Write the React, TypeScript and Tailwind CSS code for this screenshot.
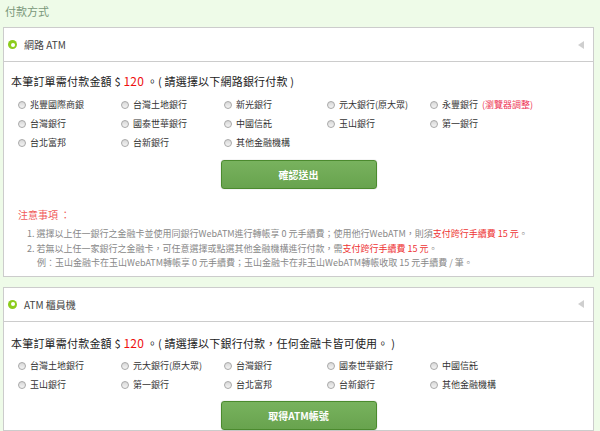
import React from "react";

const font = { fontFamily: '"Noto Sans CJK TC", "Noto Sans", sans-serif' };

function Radio() {
  return (
    <span className="inline-block w-[8px] h-[8px] rounded-full border border-[#a8a8a8] bg-gradient-to-b from-[#d8d8d8] to-[#f4f4f4] shrink-0" />
  );
}

function Option({ label, extra }: { label: string; extra?: string }) {
  return (
    <div className="flex items-center gap-[4px] h-[19px] text-[9px] text-[#333] whitespace-nowrap">
      <Radio />
      <span>{label}</span>
      {extra && <span className="text-[#ee3355]">{extra}</span>}
    </div>
  );
}

function Header({ title }: { title: string }) {
  return (
    <div className="h-[34px] border-b border-[#cccccc] flex items-center pl-[4px] pr-[9px]">
      <span className="w-[9px] h-[9px] rounded-full bg-[#8ccc1c] flex items-center justify-center">
        <span className="w-[4px] h-[4px] rounded-full bg-white" />
      </span>
      <span className="ml-[7px] text-[10px] text-[#444]">{title}</span>
      <span className="ml-auto w-0 h-0 border-y-[4px] border-y-transparent border-r-[6px] border-r-[#cfcfcf]" />
    </div>
  );
}

function Amount({ tail }: { tail: string }) {
  return (
    <div className="text-[11px] leading-[16px] tracking-[0.2px] text-[#222] whitespace-nowrap">
      本筆訂單需付款金額 $ <span className="text-[#ee1111] text-[12px]">120</span> 。( {tail} )
    </div>
  );
}

function GreenButton({ label }: { label: string }) {
  return (
    <div className="w-[156px] h-[29px] rounded-[3px] border border-[#4b8a2e] bg-gradient-to-b from-[#78b25e] to-[#68a34e] flex items-center justify-center text-white text-[10px] font-bold shadow-[0_0_1px_#999]">
      {label}
    </div>
  );
}

export default function App() {
  const web1 = [
    ["兆豐國際商銀"], ["台灣土地銀行"], ["新光銀行"], ["元大銀行(原大眾)"], ["永豐銀行", "(瀏覽器調整)"],
    ["台灣銀行"], ["國泰世華銀行"], ["中國信託"], ["玉山銀行"], ["第一銀行"],
    ["台北富邦"], ["台新銀行"], ["其他金融機構"],
  ];
  const atm = [
    "台灣土地銀行", "元大銀行(原大眾)", "台灣銀行", "國泰世華銀行", "中國信託",
    "玉山銀行", "第一銀行", "台北富邦", "台新銀行", "其他金融機構",
  ];
  return (
    <div className="w-[600px] h-[431px] overflow-hidden bg-[#eefbe8]" style={font}>
      <div className="h-[27px] pl-[5px] pt-[3px] text-[11px] leading-[16px] text-[#7a987a]">付款方式</div>

      <div className="ml-[3px] w-[591px] border border-[#cccccc] bg-white">
        <Header title="網路 ATM" />
        <div className="pl-[7px] pt-[11px]">
          <Amount tail="請選擇以下網路銀行付款" />
        </div>
        <div className="pl-[14px] pt-[6px] grid grid-cols-[repeat(5,103px)]">
          {web1.map(([l, e], i) => (
            <Option key={i} label={l} extra={e} />
          ))}
        </div>
        <div className="flex justify-center pt-[8px]">
          <GreenButton label="確認送出" />
        </div>
        <div className="pl-[14px] pt-[19px] text-[10px] leading-[14px] text-[#f05a5a]">注意事項 ：</div>
        <div className="pl-[23px] pt-[5px] pb-[5px] text-[9px] leading-[14.5px] text-[#888]">
          <div>
            1. 選擇以上任一銀行之金融卡並使用同銀行WebATM進行轉帳享 0 元手續費；使用他行WebATM，則須
            <span className="text-[#ee3333]">支付跨行手續費 15 元</span>。
          </div>
          <div>
            2. 若無以上任一家銀行之金融卡，可任意選擇或點選其他金融機構進行付款，需
            <span className="text-[#ee3333]">支付跨行手續費 15 元</span>。
          </div>
          <div className="pl-[10px]">
            例：玉山金融卡在玉山WebATM轉帳享 0 元手續費；玉山金融卡在非玉山WebATM轉帳收取 15 元手續費 / 筆。
          </div>
        </div>
      </div>

      <div className="ml-[3px] mt-[10px] w-[591px] border border-[#cccccc] bg-white">
        <Header title="ATM 櫃員機" />
        <div className="pl-[7px] pt-[13px]">
          <Amount tail="請選擇以下銀行付款，任何金融卡皆可使用。" />
        </div>
        <div className="pl-[14px] pt-[6px] grid grid-cols-[repeat(5,103px)]">
          {atm.map((l, i) => (
            <Option key={i} label={l} />
          ))}
        </div>
        <div className="flex justify-center pt-[6px]">
          <GreenButton label="取得ATM帳號" />
        </div>
      </div>
    </div>
  );
}
